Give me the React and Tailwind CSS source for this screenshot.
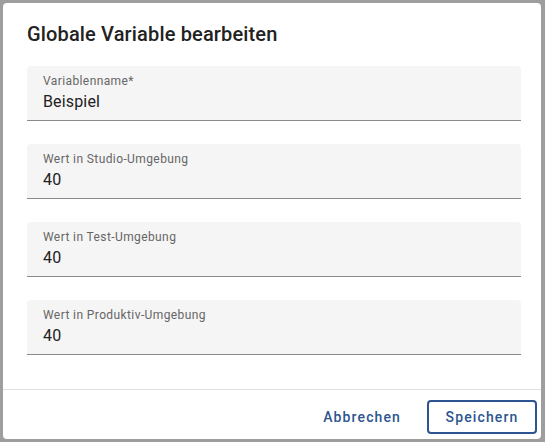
import React from 'react';

const fields = [
  { label: 'Variablenname*', value: 'Beispiel' },
  { label: 'Wert in Studio-Umgebung', value: '40' },
  { label: 'Wert in Test-Umgebung', value: '40' },
  { label: 'Wert in Produktiv-Umgebung', value: '40' },
];

const Field = ({ label, value }) => (
  <div className="bg-[#f5f5f5] rounded-t-[4px] border-b border-[#8a8a8a] px-4 pt-[7px] pb-[6px]">
    <div className="text-xs leading-4 tracking-[0.4px] text-[#666666]">{label}</div>
    <div className="mt-[1px] text-base leading-6 tracking-[0.15px] text-[#222222]">{value}</div>
  </div>
);

const App = () => {
  return (
    <div
      className="w-[545px] h-[442px] bg-[#9e9e9e] pt-[3px] pl-[3px] overflow-hidden"
      style={{ fontFamily: 'Roboto, "Noto Sans", sans-serif' }}
    >
      <div className="w-[538px] h-[436px] bg-white rounded-[4px] flex flex-col">
        <h2 className="pl-6 pt-[15px] text-xl leading-8 font-medium tracking-[0.15px] text-[#222222]">
          Globale Variable bearbeiten
        </h2>
        <div className="flex flex-col gap-[23px] mt-4 ml-6 w-[494px]">
          {fields.map((f) => (
            <Field key={f.label} label={f.label} value={f.value} />
          ))}
        </div>
        <div className="mt-auto border-t border-[#e0e0e0] h-[50px] flex items-center justify-end gap-[10px] pr-1 pt-1">
          <button className="h-[34px] px-4 text-sm font-medium tracking-[0.08em] text-[#2d5590]">
            Abbrechen
          </button>
          <button className="h-[34px] w-[110px] rounded-[4px] border-2 border-[#2d5590] text-sm font-medium tracking-[0.08em] text-[#2d5590]">
            Speichern
          </button>
        </div>
      </div>
    </div>
  );
};

export default App;
